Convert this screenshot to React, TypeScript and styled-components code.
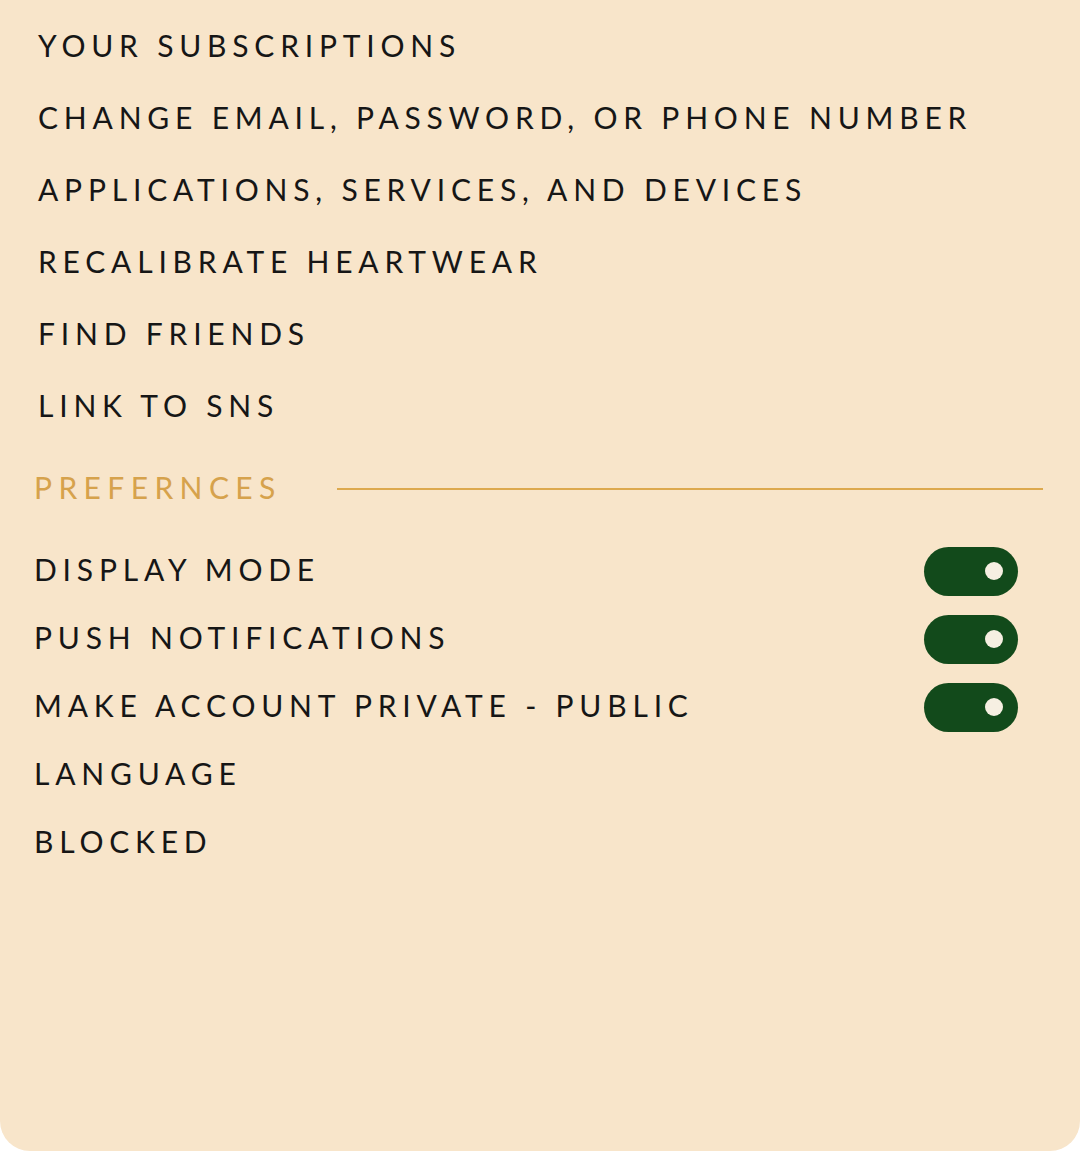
import styled, { createGlobalStyle } from 'styled-components'

const GlobalStyle = createGlobalStyle`
  html, body {
    margin: 0;
    padding: 0;
    background: #ffffff;
  }
  body {
    font-family: 'Lato', 'Liberation Sans', sans-serif;
  }
`

const Panel = styled.div`
  width: 1080px;
  height: 1151px;
  box-sizing: border-box;
  background: #f8e5ca;
  border-radius: 0 0 30px 30px;
  padding-top: 11px;
  display: flex;
  flex-direction: column;
`

const LinkList = styled.ul`
  list-style: none;
  margin: 0;
  padding: 0 0 0 38px;
  display: flex;
  flex-direction: column;
`

// shared type for every row label
const Label = styled.span`
  font-size: 30px;
  line-height: 36px;
  padding-bottom: 5px;
  letter-spacing: 5.8px;
  white-space: nowrap;
`

const LinkItem = styled.li`
  height: 72px;
  display: flex;
  align-items: center;
  color: #161616;
`

const SectionHeader = styled.div`
  margin: 23px 37px 25px 34px;
  height: 46px;
  display: flex;
  align-items: center;
`

const SectionTitle = styled.h2`
  margin: 0;
  padding-bottom: 5px;
  font-size: 30px;
  line-height: 36px;
  font-weight: 400;
  letter-spacing: 6.4px;
  color: #d6a24c;
  white-space: nowrap;
`

const Rule = styled.span`
  flex: 1;
  height: 1.5px;
  margin-left: 55px;
  background: #dda94e;
`

const PrefList = styled.ul`
  list-style: none;
  margin: 0;
  padding: 0 62px 0 34px;
  display: flex;
  flex-direction: column;
`

const PrefRow = styled.li`
  height: 68px;
  display: flex;
  align-items: center;
  justify-content: space-between;
  color: #161616;
`

const Toggle = styled.button<{ $on?: boolean }>`
  width: 94px;
  height: 49px;
  border: none;
  padding: 0 15px;
  border-radius: 25px;
  background: #124a1b;
  display: flex;
  align-items: center;
  justify-content: ${({ $on }) => ($on ? 'flex-end' : 'flex-start')};
  cursor: pointer;

  &::after {
    content: '';
    width: 18px;
    height: 18px;
    border-radius: 50%;
    background: #f6efe2;
  }
`

const links = [
  'YOUR SUBSCRIPTIONS',
  'CHANGE EMAIL, PASSWORD, OR PHONE NUMBER',
  'APPLICATIONS, SERVICES, AND DEVICES',
  'RECALIBRATE HEARTWEAR',
  'FIND FRIENDS',
  'LINK TO SNS',
]

const prefs: { label: string; toggle?: boolean }[] = [
  { label: 'DISPLAY MODE', toggle: true },
  { label: 'PUSH NOTIFICATIONS', toggle: true },
  { label: 'MAKE ACCOUNT PRIVATE - PUBLIC', toggle: true },
  { label: 'LANGUAGE' },
  { label: 'BLOCKED' },
]

export default function App() {
  return (
    <>
      <GlobalStyle />
      <Panel>
        <LinkList>
          {links.map((l) => (
            <LinkItem key={l}>
              <Label>{l}</Label>
            </LinkItem>
          ))}
        </LinkList>
        <SectionHeader>
          <SectionTitle>PREFERNCES</SectionTitle>
          <Rule />
        </SectionHeader>
        <PrefList>
          {prefs.map((p) => (
            <PrefRow key={p.label}>
              <Label>{p.label}</Label>
              {p.toggle && <Toggle $on aria-label={p.label} />}
            </PrefRow>
          ))}
        </PrefList>
      </Panel>
    </>
  )
}
